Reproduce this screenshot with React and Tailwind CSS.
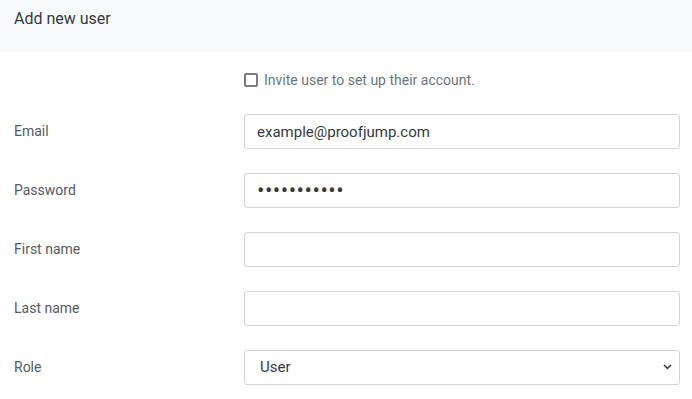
import React, { useState } from 'react';

const fields = [
  { label: 'Email', type: 'text', value: 'example@proofjump.com' },
  { label: 'Password', type: 'password', value: 'secretpass1' },
  { label: 'First name', type: 'text', value: '' },
  { label: 'Last name', type: 'text', value: '' },
];

const Row = ({ label, children }) => (
  <div className="flex items-center h-[35px]">
    <label className="w-[244px] pl-[14px] text-[14px] text-[#555b61]">{label}</label>
    <div className="flex-1 pr-[12px]">{children}</div>
  </div>
);

const App = () => {
  const [values, setValues] = useState(fields.map((f) => f.value));
  const [invite, setInvite] = useState(false);
  const [role, setRole] = useState('User');

  return (
    <div className="w-[692px] h-[399px] bg-white overflow-hidden" style={{ fontFamily: 'Roboto, "Liberation Sans", sans-serif' }}>
      {/* Header */}
      <div className="h-[52px] bg-[#f8f9fa] px-[14px] pt-[9px]">
        <h1 className="text-[16px] leading-[20px] text-[#343a40]">Add new user</h1>
      </div>

      {/* Invite checkbox */}
      <div className="flex items-center pl-[244px] mt-[21px] h-[14px] gap-[6px]">
        <input
          type="checkbox"
          checked={invite}
          onChange={(e) => setInvite(e.target.checked)}
          className="appearance-none w-[14px] h-[14px] border-2 border-[#7a7a82] rounded-[2px] bg-white"
        />
        <span className="text-[14px] text-[#6c757d]">Invite user to set up their account.</span>
      </div>

      {/* Form rows */}
      <div className="flex flex-col gap-[24px] mt-[27px]">
        {fields.map((f, i) => (
          <Row key={f.label} label={f.label}>
            <input
              type={f.type}
              value={values[i]}
              onChange={(e) => {
                const next = [...values];
                next[i] = e.target.value;
                setValues(next);
              }}
              className={`w-full h-[35px] px-[12px] border border-[#ced4da] rounded-[3px] text-[#343a40] outline-none ${
                f.type === 'password' ? 'text-[22px] tracking-[0.5px]' : 'text-[15px]'
              }`}
            />
          </Row>
        ))}
        <Row label="Role">
          <div className="relative">
            <select
              value={role}
              onChange={(e) => setRole(e.target.value)}
              className="appearance-none w-full h-[35px] px-[15px] border border-[#ced4da] rounded-[3px] text-[15px] text-[#343a40] bg-white outline-none"
            >
              <option>User</option>
              <option>Admin</option>
            </select>
            <svg className="absolute right-[8px] top-[14px] pointer-events-none" width="9" height="6" viewBox="0 0 9 6">
              <path d="M1 1l3.5 3.5L8 1" fill="none" stroke="#343a40" strokeWidth="1.5" />
            </svg>
          </div>
        </Row>
      </div>
    </div>
  );
};

export default App;
